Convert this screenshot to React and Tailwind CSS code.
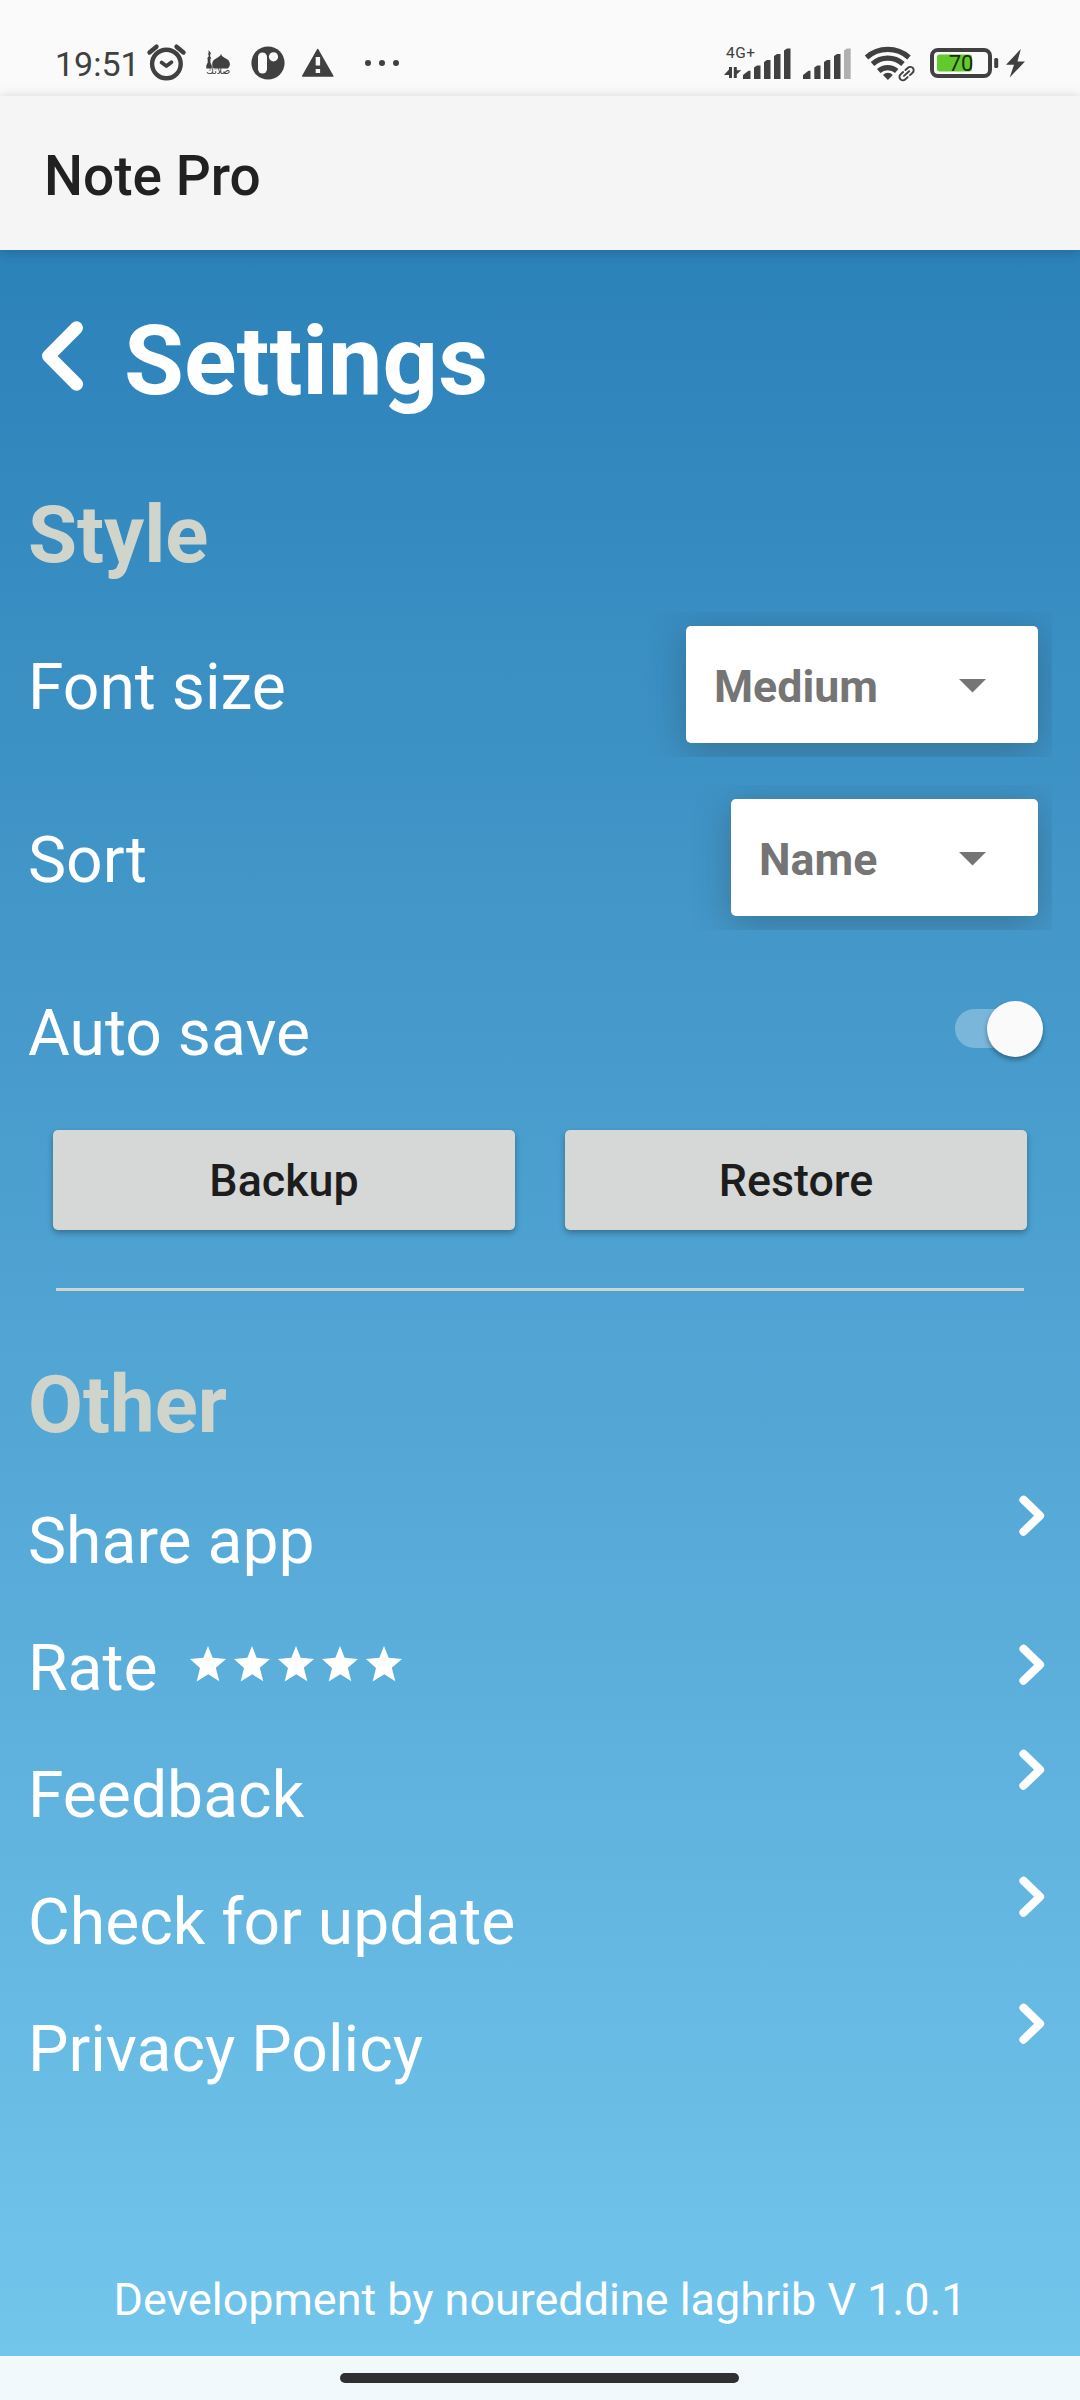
import React from "react";

const INK = "#404040";

function AlarmIcon() {
  return (
    <svg className="ml-[8px] h-[96px] w-[42px] shrink-0" viewBox="145 0 42 96" fill="none" stroke={INK}>
      <circle cx="166.4" cy="64" r="14.3" strokeWidth="4.4" />
      <path d="M149.5 52.5 156.5 46.7M183.5 52.5 176.5 46.7" strokeWidth="4.4" strokeLinecap="round" />
      <path d="M161.6 62.5 166.4 66 171.4 62.2" strokeWidth="3.8" strokeLinecap="round" strokeLinejoin="round" />
    </svg>
  );
}

function MosqueIcon() {
  return (
    <svg className="ml-[18px] h-[96px] w-[26px] shrink-0" viewBox="205 0 26 96" fill={INK}>
      <path d="M208.600 50v3.200l-1 1.400h1v2l-1.700 2h.8v4l-1.400 3v3h5.500v-3l-1.400-3v-4h1l-1.200-2v-2l.8-1.400z" />
      <path d="M221 53.500c.3 2.200 1.300 3 3.500 4.200 3.300 1.600 5.400 3.300 5.400 6.300 0 1.800-.8 3.200-2 4.600h-14c-1-1.400-1.700-2.800-1.700-4.600 0-3 2-4.700 5.200-6.300 2.200-1.200 3.200-2 3.600-4.200z" />
      <text x="218.300" y="73.500" fontSize="10" textAnchor="middle" textLength="24" lengthAdjust="spacingAndGlyphs" fontFamily="DejaVu Sans, sans-serif">صلاتك</text>
    </svg>
  );
}

function PIcon() {
  return (
    <svg className="ml-[20px] h-[96px] w-[34px] shrink-0" viewBox="251 0 34 96">
      <circle cx="268" cy="63" r="16.600" fill={INK} />
      <rect x="258" y="52.500" width="9" height="21" rx="4.500" fill="#fafafa" />
      <circle cx="273.500" cy="56.800" r="4.600" fill="#fafafa" />
    </svg>
  );
}

function WarningIcon() {
  return (
    <svg className="ml-[16px] h-[96px] w-[34px] shrink-0" viewBox="301 0 34 96">
      <path d="M317.700 49.500 332.800 76H302.700z" fill={INK} stroke={INK} strokeWidth="1.500" strokeLinejoin="round" />
      <path d="M315.700 57h4.400v8.500h-4.400zM315.700 69h4.400v4h-4.400z" fill="#fafafa" />
    </svg>
  );
}

function DotsIcon() {
  return (
    <svg className="ml-[29px] h-[96px] w-[36px] shrink-0" viewBox="364 0 36 96" fill={INK}>
      <circle cx="368" cy="63" r="3" />
      <circle cx="382" cy="63" r="3" />
      <circle cx="396" cy="63" r="3" />
    </svg>
  );
}

function MobileSignalIcon() {
  return (
    <svg className="h-[96px] w-[70px] shrink-0" viewBox="723 0 70 96" fill={INK}>
      <text x="726" y="58" fontSize="15.500" fontFamily="Roboto, sans-serif" textLength="29">4G+</text>
      <path d="M732 67v11h-3v-3h-5l5-5.500V67zM733.800 78V67h3v3.300h4.500l-4.500 4V78z" />
      <path d="M743 79v-4l5.500-4.300h2V79zM754 79V67.500l3-2h3.500V79zM764 79V62l3-2h3.500v19zM774 79V56l3-2h3.500v25zM784 79V50.500l3-2h3.500V79z" />
    </svg>
  );
}

function SecondSignalIcon() {
  return (
    <svg className="ml-[9px] h-[96px] w-[50px] shrink-0" viewBox="802 0 50 96" fill={INK}>
      <path d="M803 79v-4l5.500-4.300h2V79zM814.300 79V67.500l3-2h3.200V79zM824 79V62l3-2h3.300v19zM834 79V56l3-2h3.500v25z" />
      <path d="M844 79V50.500l3-2h3.700V79z" fill="#b0b0b0" />
    </svg>
  );
}

function WifiIcon() {
  return (
    <svg className="ml-[12px] h-[96px] w-[52px] shrink-0" viewBox="864 0 52 96" fill="none" stroke={INK}>
      <path d="M866.500 57.500a32 32 0 0 1 42.500 0M872.500 64a23 23 0 0 1 30.500 0M878.700 71a14 14 0 0 1 18 0" strokeWidth="5.200" />
      <path d="M883 75a6.500 6.500 0 0 1 9.800 0l-4.900 5z" fill={INK} stroke="none" />
      <g transform="rotate(-42 906.500 73.500)">
        <rect x="896.500" y="69.300" width="20" height="8.600" fill="#fafafa" stroke="none" />
        <path d="M905 70.200h-3.500a3.400 3.400 0 0 0 0 6.800h3.500M908 70.200h3.500a3.400 3.400 0 0 1 0 6.800H908M903 73.600h7" strokeWidth="1.900" strokeLinecap="round" />
      </g>
    </svg>
  );
}

function BatteryIcon() {
  return (
    <svg className="ml-[12px] h-[96px] w-[74px] shrink-0" viewBox="928 0 74 96">
      <rect x="932" y="50" width="58" height="26" rx="6" fill="none" stroke={INK} strokeWidth="4" />
      <rect x="937" y="54.500" width="35" height="17" rx="2.500" fill="#62c92d" />
      <rect x="994.200" y="58" width="4" height="10" rx="1.500" fill={INK} />
      <text x="961" y="71.300" fontSize="22" textAnchor="middle" fill="#1c2b14" fontFamily="Roboto, sans-serif">70</text>
    </svg>
  );
}

function BoltIcon() {
  return (
    <svg className="ml-[3px] h-[96px] w-[22px] shrink-0" viewBox="1005 0 22 96" fill={INK}>
      <path d="M1020.800 49 1006 64.800h8L1009.700 77.500 1025 61.500h-7.500z" />
    </svg>
  );
}

function StatusBar() {
  return (
    <div className="flex h-[96px] w-full items-center justify-between bg-[#fafafa] pr-[53px] pl-[55px]">
      <div className="flex items-center">
        <span className="w-[82px] pt-[31px] text-[34px] leading-[96px] whitespace-nowrap text-[#404040]">19:51</span>
        <AlarmIcon />
        <MosqueIcon />
        <PIcon />
        <WarningIcon />
        <DotsIcon />
      </div>
      <div className="flex items-center">
        <MobileSignalIcon />
        <SecondSignalIcon />
        <WifiIcon />
        <BatteryIcon />
        <BoltIcon />
      </div>
    </div>
  );
}

function Spinner({ label, className }) {
  return (
    <div className="flex h-full items-center overflow-hidden pr-[14px] pl-[60px]">
      <button
        className={`flex h-[117px] items-center justify-between rounded-[5px] bg-white pr-[52px] pl-[28px] shadow-[0_8px_36px_rgba(40,50,60,0.34)] ${className}`}
      >
        <span className="pt-[5px] text-[44.7px] leading-none font-bold text-[#757575]">{label}</span>
        <svg className="mt-[2px] h-[14px] w-[27px]" viewBox="0 0 27 14">
          <path d="M0 0h27L13.500 13.500z" fill="#757575" />
        </svg>
      </button>
    </div>
  );
}

function SettingRow({ label, children }) {
  return (
    <div className="flex h-[145px] items-center justify-between pl-[28px]">
      <span className="pt-[6px] text-[64.2px] leading-none text-white">{label}</span>
      {children}
    </div>
  );
}

function Switch() {
  return (
    <div role="switch" aria-checked="true" className="mr-[37px] mb-[4px] flex h-[56px] w-[88px] items-center">
      <div className="h-[39px] w-[77px] rounded-full bg-white/28" />
      <div className="-ml-[45px] h-[56px] w-[56px] shrink-0 rounded-full bg-[#fafafa] shadow-[0_3px_5px_rgba(0,0,0,0.34)]" />
    </div>
  );
}

function Star() {
  return (
    <svg className="h-[36px] w-[36px]" viewBox="0 0 36 36" fill="#fff">
      <path d="M18 0 22.600 11.700 36 13 25.800 21.800 29.300 35.300 18.300 28.300 6.700 35.600 10 22 0 13 13.400 11.700z" />
    </svg>
  );
}

function Chevron({ className }) {
  return (
    <svg className={`h-[42px] w-[26px] ${className}`} viewBox="0 0 26 42" fill="none" stroke="#fff" strokeWidth="8.200" strokeLinecap="round" strokeLinejoin="round">
      <path d="M4.500 4.800 21 20.700 4.500 36.600" />
    </svg>
  );
}

function LinkRow({ label, chevron = "mb-[50px]", children }) {
  return (
    <div className="flex h-[127px] items-center justify-between pr-[35px] pl-[28px]">
      <div className="flex items-center">
        <span className="pt-px text-[64.2px] leading-none text-white">{label}</span>
        {children}
      </div>
      <Chevron className={chevron} />
    </div>
  );
}

function ActionButton({ children }) {
  return (
    <button className="h-[100px] flex-1 rounded-[5px] bg-[#d6d8d7] pt-[3px] text-[44.8px] leading-none font-medium text-[#1d1d1d] shadow-[0_3px_6px_rgba(0,0,0,0.3)]">
      {children}
    </button>
  );
}

export default function App() {
  return (
    <div className="flex h-[2400px] w-[1080px] flex-col overflow-hidden font-['Roboto',sans-serif]">
      <StatusBar />
      <header className="relative z-10 flex h-[154px] items-center bg-[#f5f5f5] pt-[7px] pl-[44px] shadow-[0_2px_12px_rgba(0,0,0,0.2)]">
        <h1 className="text-[55px] leading-none font-medium text-[#212121]">Note Pro</h1>
      </header>

      <main className="flex h-[2106px] flex-col bg-linear-to-b from-[#2b82b9] to-[#72c5eb]">
        <div className="flex h-[224px] items-center pl-[41px]">
          <svg className="mb-[12px] h-[70px] w-[42px]" viewBox="0 0 42 70" fill="none" stroke="#fff" strokeWidth="13" strokeLinecap="round" strokeLinejoin="round">
            <path d="M35.500 6.800 7.500 35 35.500 63.200" />
          </svg>
          <h2 className="ml-[41px] text-[97.300px] leading-none font-bold text-white">Settings</h2>
        </div>

        <h3 className="h-[121px] pl-[28px] text-[79.750px] leading-[121px] font-bold text-[#d0d5cc]">Style</h3>

        <section className="mt-[17px] mr-[28px] flex flex-col gap-[28px]">
          <SettingRow label="Font size">
            <Spinner label="Medium" className="w-[352px]" />
          </SettingRow>
          <SettingRow label="Sort">
            <Spinner label="Name" className="w-[307px]" />
          </SettingRow>
        </section>
        <section className="mt-[28px]">
          <SettingRow label="Auto save">
            <Switch />
          </SettingRow>
        </section>

        <div className="mt-[27px] flex gap-[50px] px-[53px]">
          <ActionButton>Backup</ActionButton>
          <ActionButton>Restore</ActionButton>
        </div>

        <div className="mx-[56px] mt-[58px] h-[3px] shrink-0 bg-[#cdd5cf]" />

        <h3 className="flex h-[186px] items-center pt-[41px] pl-[28px] text-[79.750px] leading-none font-bold text-[#d0d5cc]">Other</h3>

        <nav className="flex flex-col">
          <LinkRow label="Share app" />
          <LinkRow label="Rate" chevron="mb-[6px]">
            <div className="mb-[6px] ml-[32px] flex gap-[8px]">
              <Star />
              <Star />
              <Star />
              <Star />
              <Star />
            </div>
          </LinkRow>
          <LinkRow label="Feedback" />
          <LinkRow label="Check for update" />
          <LinkRow label="Privacy Policy" />
        </nav>

        <footer className="flex flex-1 items-center justify-center pt-[132px] text-[44.900px] leading-none text-white">
          Development by noureddine laghrib V 1.0.1
        </footer>
      </main>

      <div className="flex h-[44px] justify-center bg-[#f1f9fd] pt-[17px] pr-[2px]">
        <div className="h-[10px] w-[399px] rounded-full bg-[#2f3032]" />
      </div>
    </div>
  );
}
